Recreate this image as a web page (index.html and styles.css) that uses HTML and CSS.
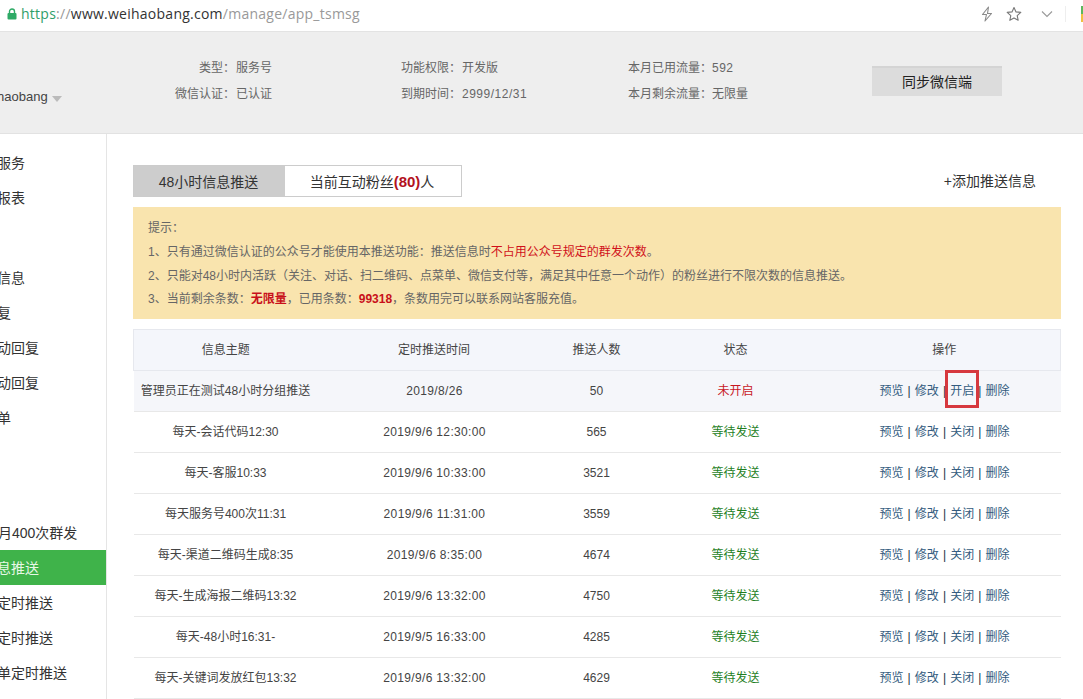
FILE: index.html
```html
<!DOCTYPE html>
<html lang="zh-CN">
<head>
<meta charset="utf-8">
<title>48小时信息推送</title>
<link rel="stylesheet" href="styles.css">
</head>
<body>
<div class="toolbar">
  <svg class="lock" viewBox="0 0 10 12" width="10" height="12"><path d="M2.5 5V3.5a2.5 2.5 0 0 1 5 0V5" fill="none" stroke="#2eaa66" stroke-width="1.4"/><rect x="0.5" y="5" width="9" height="6.5" rx="1" fill="#2eaa66"/></svg>
  <div class="url"><span class="scheme">https</span><span class="muted">:</span><span class="muted">//</span><span class="host">www.weihaobang.com</span><span class="muted">/manage/app_tsmsg</span></div>
  <svg class="tool bolt" viewBox="0 0 14 16" width="14" height="16"><path d="M8.5 1 2.5 8.5h4L5 15l6.5-7.5h-4z" fill="none" stroke="#8a8a8a" stroke-width="1.1" stroke-linejoin="round"/></svg>
  <svg class="tool star" viewBox="0 0 16 16" width="16" height="16"><path d="M8 1.5l2 4.4 4.8.5-3.6 3.2 1 4.7L8 11.9l-4.2 2.4 1-4.7L1.2 6.4 6 5.9z" fill="none" stroke="#777" stroke-width="1.1" stroke-linejoin="round"/></svg>
  <svg class="tool chev" viewBox="0 0 12 8" width="12" height="8"><path d="M1 1.5l5 5 5-5" fill="none" stroke="#999" stroke-width="1.1"/></svg>
  <span class="sep"></span>
  <span class="ext"></span>
</div>

<header class="account">
  <div class="brand">haobang<span class="caret"></span></div>
  <dl class="facts facts-a">
    <dt>类型：</dt><dd>服务号</dd>
    <dt>微信认证：</dt><dd>已认证</dd>
  </dl>
  <dl class="facts facts-b">
    <dt>功能权限：</dt><dd>开发版</dd>
    <dt>到期时间：</dt><dd class="num">2999/12/31</dd>
  </dl>
  <dl class="facts facts-c">
    <dt>本月已用流量：</dt><dd class="num">592</dd>
    <dt>本月剩余流量：</dt><dd>无限量</dd>
  </dl>
  <button class="sync">同步微信端</button>
</header>

<div class="layout">
  <nav class="side">
    <a class="item cut">服务</a>
    <a class="item cut">报表</a>
    <span class="gap-a"></span>
    <a class="item cut">信息</a>
    <a class="item cut">复</a>
    <a class="item cut">动回复</a>
    <a class="item cut">动回复</a>
    <a class="item cut">单</a>
    <span class="gap-b"></span>
    <a class="item cut-s">月400次群发</a>
    <a class="item active cut">息推送</a>
    <a class="item cut">定时推送</a>
    <a class="item cut">定时推送</a>
    <a class="item cut">单定时推送</a>
  </nav>

  <main class="main">
    <div class="tabbar">
      <div class="tabs">
        <span class="tab on">48小时信息推送</span>
        <span class="tab">当前互动粉丝<b class="count">(80)</b>人</span>
      </div>
      <a class="add">+添加推送信息</a>
    </div>

    <div class="notice">
      <p>提示：</p>
      <p>1、只有通过微信认证的公众号才能使用本推送功能：推送信息时<span class="red">不占用公众号规定的群发次数</span>。</p>
      <p>2、只能对48小时内活跃（关注、对话、扫二维码、点菜单、微信支付等，满足其中任意一个动作）的粉丝进行不限次数的信息推送。</p>
      <p>3、当前剩余条数：<b class="strong">无限量</b>，已用条数：<b class="strong">99318</b>，条数用完可以联系网站客服充值。</p>
    </div>

    <table class="list">
      <colgroup><col class="c1"><col class="c2"><col class="c3"><col class="c4"><col class="c5"></colgroup>
      <thead>
        <tr><th>信息主题</th><th>定时推送时间</th><th>推送人数</th><th>状态</th><th>操作</th></tr>
      </thead>
      <tbody>
        <tr class="hl"><td>管理员正在测试48小时分组推送</td><td class="time">2019/8/26</td><td>50</td><td class="off">未开启</td><td class="ops"><a>预览</a> | <a>修改</a> | <a class="marked">开启</a> | <a>删除</a></td></tr>
        <tr><td>每天-会话代码12:30</td><td class="time">2019/9/6 12:30:00</td><td>565</td><td class="wait">等待发送</td><td class="ops"><a>预览</a> | <a>修改</a> | <a>关闭</a> | <a>删除</a></td></tr>
        <tr><td>每天-客服10:33</td><td class="time">2019/9/6 10:33:00</td><td>3521</td><td class="wait">等待发送</td><td class="ops"><a>预览</a> | <a>修改</a> | <a>关闭</a> | <a>删除</a></td></tr>
        <tr><td>每天服务号400次11:31</td><td class="time">2019/9/6 11:31:00</td><td>3559</td><td class="wait">等待发送</td><td class="ops"><a>预览</a> | <a>修改</a> | <a>关闭</a> | <a>删除</a></td></tr>
        <tr><td>每天-渠道二维码生成8:35</td><td class="time">2019/9/6 8:35:00</td><td>4674</td><td class="wait">等待发送</td><td class="ops"><a>预览</a> | <a>修改</a> | <a>关闭</a> | <a>删除</a></td></tr>
        <tr><td>每天-生成海报二维码13:32</td><td class="time">2019/9/6 13:32:00</td><td>4750</td><td class="wait">等待发送</td><td class="ops"><a>预览</a> | <a>修改</a> | <a>关闭</a> | <a>删除</a></td></tr>
        <tr><td>每天-48小时16:31-</td><td class="time">2019/9/5 16:33:00</td><td>4285</td><td class="wait">等待发送</td><td class="ops"><a>预览</a> | <a>修改</a> | <a>关闭</a> | <a>删除</a></td></tr>
        <tr><td>每天-关键词发放红包13:32</td><td class="time">2019/9/6 13:32:00</td><td>4629</td><td class="wait">等待发送</td><td class="ops"><a>预览</a> | <a>修改</a> | <a>关闭</a> | <a>删除</a></td></tr>
      </tbody>
    </table>
  </main>
</div>
</body>
</html>
```
FILE: styles.css
```css
* { box-sizing: border-box; }
html, body { margin: 0; height: 699px; overflow: hidden; background: #fff; }
body { font: 12px/1.4 "Liberation Sans", "Noto Sans CJK SC", sans-serif; color: #444; }
p, dl, dd { margin: 0; }

.toolbar { height: 32px; display: flex; align-items: center; padding-left: 7px; border-bottom: 1px solid #e3e3e3; background: #fff; overflow: hidden; }
.lock { flex: none; margin-bottom: 3px; }
.url { flex: 1; margin-left: 4px; margin-bottom: 3px; font: 14px/18px "Open Sans", sans-serif; letter-spacing: .25px; color: #999; white-space: nowrap; }
.scheme { color: #2f9e6a; }
.host { color: #333; }
.tool { flex: none; margin-bottom: 3px; }
.star { margin-left: 12px; }
.chev { margin-left: 19px; }
.sep { flex: none; width: 1px; height: 16px; margin: 0 0 3px 12px; background: #eee; }
.ext { flex: none; width: 4px; height: 16px; margin: 0 -2px 3px 15px; background: linear-gradient(#5cb85c 50%, #f0c040 50%); }

.account { height: 102px; display: flex; background: #eee; border-bottom: 1px solid #e2e2e2; }
.brand { width: 135px; flex: none; padding-top: 56px; font-size: 13px; line-height: 18px; text-indent: -3px; color: #444; }
.caret { display: inline-block; margin-left: 4px; vertical-align: -1px; border: 5px solid transparent; border-top: 6px solid #bbb; border-bottom: 0; }
.facts { display: grid; grid-auto-rows: 26px; align-content: start; padding-top: 23px; line-height: 26px; color: #666; flex: none; }
.facts-a { grid-template-columns: 100px auto; column-gap: 1px; width: 266px; }
.facts-a dt { text-align: right; }
.facts-b { grid-template-columns: 60px auto; column-gap: 1px; width: 227px; }
.facts-c { grid-template-columns: 84px auto; width: 244px; }
.num { letter-spacing: .5px; }
.sync { align-self: flex-start; width: 130px; height: 30px; margin-top: 34px; border: 0; border-top: 2px solid #d4d4d4; padding: 0 0 2px; background: #dcdcdc; color: #222; font: 14px/26px "Noto Sans CJK SC", sans-serif; }

.layout { display: flex; height: 567px; }
.side { width: 107px; flex: none; padding-top: 11px; border-right: 1px solid #e5e5e5; display: flex; flex-direction: column; }
.item { height: 35px; flex: none; line-height: 37px; font-size: 14px; color: #333; white-space: nowrap; }
.cut { text-indent: -3px; }
.cut-s { text-indent: -2px; }
.active { background: #3fb34a; color: #e8f8e6; }
.gap-a { height: 45px; flex: none; }
.gap-b { height: 80px; flex: none; }

.main { flex: 1; min-width: 0; padding: 31px 22px 0 26px; }
.tabbar { display: flex; justify-content: space-between; align-items: center; height: 32px; }
.tabs { display: flex; height: 32px; border: 1px solid #ccc; font-size: 14px; line-height: 32px; }
.tab { width: 176px; text-indent: -2px; text-align: center; color: #333; }
.tab.on { width: 151px; background: #cdcdcd; }
.count { font-size: 15px; color: #b3121d; }
.add { margin-top: 2px; margin-right: 25px; font-size: 14px; color: #333; }

.notice { height: 112px; margin-top: 10px; padding: 10px 15px 0; background: #f9e4ae; color: #666; line-height: 23.8px; }
.red { color: #d0101a; }
.strong { color: #c8101a; }

.list { width: 927px; margin-top: 10px; border-collapse: collapse; table-layout: fixed; color: #444; }
.c1 { width: 184px; }
.c2 { width: 233px; }
.c3 { width: 92px; }
.c4 { width: 186px; }
.c5 { width: 232px; }
.list th { height: 41px; font-weight: 400; color: #444; background: #f4f6fb; border: 1px solid #e6e8ee; border-width: 1px 0; }
.list thead tr { border-left: 1px solid #e6e8ee; border-right: 1px solid #e6e8ee; }
.list td { height: 41px; padding: 0; text-align: center; border-bottom: 1px solid #e8e8e8; white-space: nowrap; }
.hl td { background: #f5f6fa; }
.list .time { letter-spacing: .35px; padding-left: 1px; }
.off { color: #c8171f; }
.wait { color: #1f7f1f; }
.ops { color: #234; word-spacing: .8px; }
.ops a { color: #345c80; }
.marked { position: relative; }
.marked::after { content: ""; position: absolute; left: -5px; right: -5px; top: -14px; bottom: -10px; border: 3px solid #d6383e; }
```
